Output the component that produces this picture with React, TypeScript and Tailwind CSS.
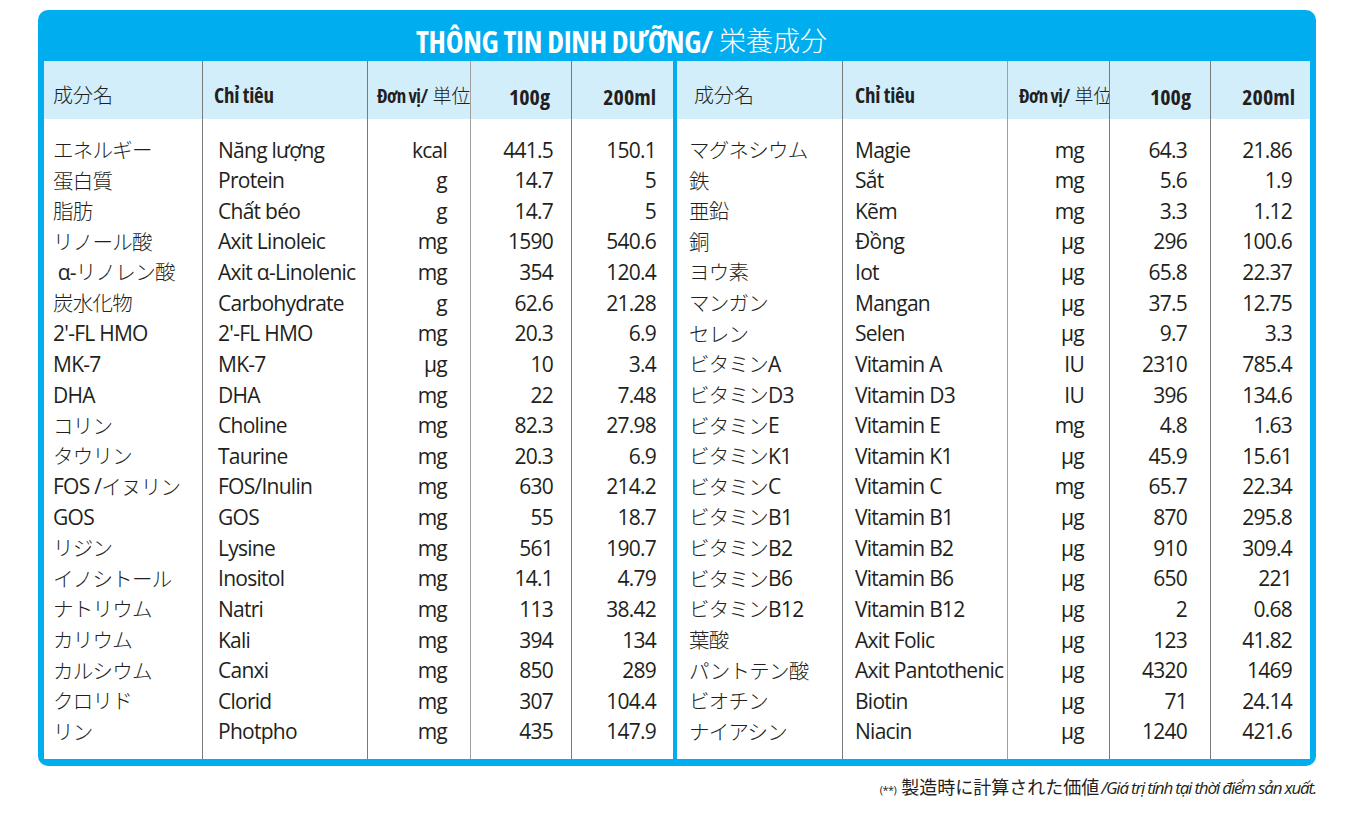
import React from 'react';

type Row = [string, string, string, string, string];

const leftRows: Row[] = [
  ['エネルギー', 'Năng lượng', 'kcal', '441.5', '150.1'],
  ['蛋白質', 'Protein', 'g', '14.7', '5'],
  ['脂肪', 'Chất béo', 'g', '14.7', '5'],
  ['リノール酸', 'Axit Linoleic', 'mg', '1590', '540.6'],
  ['\u00a0α-リノレン酸', 'Axit α-Linolenic', 'mg', '354', '120.4'],
  ['炭水化物', 'Carbohydrate', 'g', '62.6', '21.28'],
  ["2'-FL HMO", "2'-FL HMO", 'mg', '20.3', '6.9'],
  ['MK-7', 'MK-7', 'μg', '10', '3.4'],
  ['DHA', 'DHA', 'mg', '22', '7.48'],
  ['コリン', 'Choline', 'mg', '82.3', '27.98'],
  ['タウリン', 'Taurine', 'mg', '20.3', '6.9'],
  ['FOS /イヌリン', 'FOS/Inulin', 'mg', '630', '214.2'],
  ['GOS', 'GOS', 'mg', '55', '18.7'],
  ['リジン', 'Lysine', 'mg', '561', '190.7'],
  ['イノシトール', 'Inositol', 'mg', '14.1', '4.79'],
  ['ナトリウム', 'Natri', 'mg', '113', '38.42'],
  ['カリウム', 'Kali', 'mg', '394', '134'],
  ['カルシウム', 'Canxi', 'mg', '850', '289'],
  ['クロリド', 'Clorid', 'mg', '307', '104.4'],
  ['リン', 'Photpho', 'mg', '435', '147.9'],
];

const rightRows: Row[] = [
  ['マグネシウム', 'Magie', 'mg', '64.3', '21.86'],
  ['鉄', 'Sắt', 'mg', '5.6', '1.9'],
  ['亜鉛', 'Kẽm', 'mg', '3.3', '1.12'],
  ['銅', 'Đồng', 'μg', '296', '100.6'],
  ['ヨウ素', 'Iot', 'μg', '65.8', '22.37'],
  ['マンガン', 'Mangan', 'μg', '37.5', '12.75'],
  ['セレン', 'Selen', 'μg', '9.7', '3.3'],
  ['ビタミンA', 'Vitamin A', 'IU', '2310', '785.4'],
  ['ビタミンD3', 'Vitamin D3', 'IU', '396', '134.6'],
  ['ビタミンE', 'Vitamin E', 'mg', '4.8', '1.63'],
  ['ビタミンK1', 'Vitamin K1', 'μg', '45.9', '15.61'],
  ['ビタミンC', 'Vitamin C', 'mg', '65.7', '22.34'],
  ['ビタミンB1', 'Vitamin B1', 'μg', '870', '295.8'],
  ['ビタミンB2', 'Vitamin B2', 'μg', '910', '309.4'],
  ['ビタミンB6', 'Vitamin B6', 'μg', '650', '221'],
  ['ビタミンB12', 'Vitamin B12', 'μg', '2', '0.68'],
  ['葉酸', 'Axit Folic', 'μg', '123', '41.82'],
  ['パントテン酸', 'Axit Pantothenic', 'μg', '4320', '1469'],
  ['ビオチン', 'Biotin', 'μg', '71', '24.14'],
  ['ナイアシン', 'Niacin', 'μg', '1240', '421.6'],
];

interface ColSpec {
  width: string;
  head: string;
  body: string;
}

const leftCols: ColSpec[] = [
  { width: 'w-[158px]', head: 'justify-start pl-[9px]', body: 'justify-start pl-[9px]' },
  { width: 'w-[165px] border-l border-[#7a7a7a]', head: 'justify-start pl-[11px]', body: 'justify-start pl-[15px]' },
  { width: 'w-[103px] border-l border-[#7a7a7a]', head: 'justify-start pl-[9px]', body: 'justify-end pr-[23px]' },
  { width: 'w-[101px] border-l border-[#a0a0a0]', head: 'justify-end pr-[21px]', body: 'justify-end pr-[18px]' },
  { width: 'w-[102px] border-l border-[#7a7a7a]', head: 'justify-end pr-[17px]', body: 'justify-end pr-[17px]' },
];

const rightCols: ColSpec[] = [
  { width: 'w-[165px]', head: 'justify-start pl-[17px]', body: 'justify-start pl-[12px]' },
  { width: 'w-[165px] border-l border-[#7a7a7a]', head: 'justify-start pl-[12px]', body: 'justify-start pl-[12px]' },
  { width: 'w-[102px] border-l border-[#a0a0a0]', head: 'justify-start pl-[11px]', body: 'justify-end pr-[25px]' },
  { width: 'w-[101px] border-l border-[#7a7a7a]', head: 'justify-end pr-[19px]', body: 'justify-end pr-[23px]' },
  { width: 'w-[100px] border-l border-[#7a7a7a]', head: 'justify-end pr-[15px]', body: 'justify-end pr-[18px]' },
];

// Japanese runs are set lighter than the Latin text around them
const JpName: React.FC<{ text: string }> = ({ text }) => (
  <>
    {text.split(/([\u3000-\u9fff]+)/).map((part, k) =>
      /[\u3000-\u9fff]/.test(part) ? (
        <span key={k} className="text-[20.5px] font-light">
          {part}
        </span>
      ) : (
        <span key={k}>{part}</span>
      )
    )}
  </>
);

const HeaderLabel: React.FC<{ index: number }> = ({ index }) => {
  if (index === 0) return <span className="text-[20px] font-light">成分名</span>;
  if (index === 1)
    return <span className="text-[21px] font-bold font-stretch-condensed tracking-[-0.01em]">Chỉ tiêu</span>;
  if (index === 2)
    return (
      <span className="whitespace-nowrap">
        <span className="text-[19px] font-bold font-stretch-condensed tracking-[-0.03em]">Đơn vị/</span>
        <span className="text-[19px] font-light"> 単位</span>
      </span>
    );
  if (index === 3) return <span className="text-[22px] font-bold font-stretch-condensed">100g</span>;
  return <span className="text-[22px] font-bold font-stretch-condensed">200ml</span>;
};

const NutrientTable: React.FC<{ rows: Row[]; cols: ColSpec[] }> = ({ rows, cols }) => (
  <div className="flex">
    {cols.map((col, i) => (
      <div key={i} className={`flex flex-col ${col.width}`}>
        <div className={`flex h-[58px] items-center bg-[#d3eefb] pt-[12px] ${col.head}`}>
          <HeaderLabel index={i} />
        </div>
        <div className="flex flex-col bg-white pt-[16px] pb-[11px]">
          {rows.map((r, j) => (
            <div
              key={j}
              className={`flex h-[30.63px] items-center whitespace-nowrap text-[21px] tracking-[-0.035em] ${col.body}`}
            >
              {i === 0 ? <JpName text={r[i]} /> : r[i]}
            </div>
          ))}
        </div>
      </div>
    ))}
  </div>
);

export default function App() {
  return (
    <div
      className="min-h-[822px] w-[1356px] bg-white pt-[10px] text-[#231f20]"
      style={{ fontFamily: '"Open Sans", "Noto Sans CJK JP", sans-serif' }}
    >
      <div className="ml-[38px] w-[1278px] rounded-[10px] bg-[#00aeef] px-[6px] pb-[7px]">
        <div className="flex h-[51px] items-center pl-[372px] pt-[11px] text-white">
          <span className="text-[30px] font-bold font-stretch-condensed tracking-[-0.01em]">THÔNG TIN DINH DƯỠNG/</span>
          <span className="ml-[6px] text-[27px] font-light">栄養成分</span>
        </div>
        <div className="flex">
          <NutrientTable rows={leftRows} cols={leftCols} />
          <div className="w-[4px] bg-[#00aeef]" />
          <NutrientTable rows={rightRows} cols={rightCols} />
        </div>
      </div>
      <div className="mt-[8px] flex w-[1316px] items-baseline justify-end">
        <span className="mr-[5px] text-[11px] tracking-[-0.05em]">(**)</span>
        <span className="text-[18px]">製造時に計算された価値</span>
        <span className="ml-[2px] text-[17px] italic tracking-[-0.07em]">/Giá trị tính tại thời điểm sản xuất.</span>
      </div>
    </div>
  );
}
